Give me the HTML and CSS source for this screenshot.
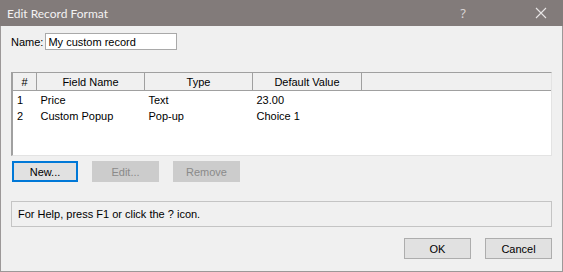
FILE: index.html
```html
<!DOCTYPE html>
<html lang="en">
<head>
    <meta charset="UTF-8">
    <title>Edit Record Format</title>
    <link rel="stylesheet" href="styles.css">
</head>
<body>
    <div class="window">
        <div class="titlebar">
            <span class="title">Edit Record Format</span>
            <div class="title-btns">
                <span class="help-btn">?</span>
                <svg class="close-btn" width="12" height="12" viewBox="0 0 12 12">
                    <path d="M1 1 L11 11 M11 1 L1 11" stroke="#e8e6e6" stroke-width="1.1" fill="none"/>
                </svg>
            </div>
        </div>

        <div class="content">
            <div class="name-row">
                <label for="recName">Name:</label>
                <input type="text" id="recName" value="My custom record">
            </div>

            <div class="list">
                <table>
                    <thead>
                        <tr>
                            <th class="col-num">#</th>
                            <th class="col-name">Field Name</th>
                            <th class="col-type">Type</th>
                            <th class="col-default">Default Value</th>
                            <th class="col-fill"></th>
                        </tr>
                    </thead>
                    <tbody>
                        <tr>
                            <td>1</td>
                            <td>Price</td>
                            <td>Text</td>
                            <td>23.00</td>
                            <td></td>
                        </tr>
                        <tr>
                            <td>2</td>
                            <td>Custom Popup</td>
                            <td>Pop-up</td>
                            <td>Choice 1</td>
                            <td></td>
                        </tr>
                    </tbody>
                </table>
            </div>

            <div class="list-btns">
                <button class="btn focused">New...</button>
                <button class="btn" disabled>Edit...</button>
                <button class="btn" disabled>Remove</button>
            </div>

            <div class="status">For Help, press F1 or click the ? icon.</div>

            <div class="dialog-btns">
                <button class="btn">OK</button>
                <button class="btn">Cancel</button>
            </div>
        </div>
    </div>
</body>
</html>
```

FILE: styles.css
```css
/* General */
body {
    margin: 0;
    font-family: "Liberation Sans", Arial, sans-serif;
    font-size: 11px;
    color: #000;
}

.window {
    width: 563px;
    height: 272px;
    box-sizing: border-box;
    background-color: #f0f0f0;
    border: 1px solid #9c9898;
    border-top: none;
    display: flex;
    flex-direction: column;
}

/* Title bar */
.titlebar {
    height: 26px;
    margin: 0 -1px;
    background-color: #827b7a;
    display: flex;
    align-items: center;
    justify-content: space-between;
    padding-left: 7px;
}

.title {
    font-family: Lato, "Noto Sans", sans-serif;
    font-size: 12px;
    color: #f4f2f2;
}

.title-btns {
    display: flex;
    align-items: center;
}

.help-btn {
    font-family: "Noto Sans", sans-serif;
    font-size: 13px;
    color: #d8d4d4;
    margin-right: 69px;
}

.close-btn {
    margin-right: 16px;
}

/* Content */
.content {
    padding: 7px 10px 0 10px;
    display: flex;
    flex-direction: column;
}

.name-row {
    display: flex;
    align-items: center;
    gap: 2px;
}

.name-row label {
    padding-top: 1px;
}

.name-row input {
    width: 132px;
    height: 17px;
    box-sizing: border-box;
    border: 1px solid #a9a9a9;
    padding: 0 2px;
    font-family: "Liberation Sans", Arial, sans-serif;
    font-size: 11px;
    outline: none;
}

/* List view */
.list {
    margin-top: 22px;
    width: 541px;
    height: 84px;
    box-sizing: border-box;
    background-color: #fff;
    border-top: 1px solid #a0a0a0;
    border-left: 2px solid #a0a0a0;
    border-right: 1px solid #e3e3e3;
    border-bottom: 1px solid #e3e3e3;
    overflow: hidden;
}

table {
    border-collapse: collapse;
    width: 100%;
}

th {
    height: 17px;
    padding: 0;
    background-color: #f0f0f0;
    font-weight: normal;
    text-align: center;
    border-bottom: 1px solid #a0a0a0;
    border-right: 1px solid #a0a0a0;
}

th.col-fill {
    border-right: none;
}

.col-num { width: 23px; }
.col-name { width: 107px; }
.col-type { width: 107px; }
.col-default { width: 108px; }

td {
    height: 16px;
    padding: 0 0 0 4px;
    white-space: nowrap;
}

tbody tr:first-child td {
    padding-top: 1px;
}

/* Buttons */
.btn {
    width: 67px;
    height: 21px;
    box-sizing: border-box;
    background-color: #e1e1e1;
    border: 1px solid #adadad;
    font-family: "Liberation Sans", Arial, sans-serif;
    font-size: 11px;
    color: #000;
    padding: 0;
}

.btn.focused {
    border: 2px solid #0078d7;
}

.btn:disabled {
    background-color: #cccccc;
    border-color: #cccccc;
    color: #8a8a8a;
}

.list-btns {
    margin-top: 5px;
    display: flex;
    gap: 14px;
}

.list-btns .btn:first-child {
    width: 66px;
    margin-left: 1px;
}

.status {
    margin-top: 19px;
    width: 541px;
    height: 26px;
    box-sizing: border-box;
    border: 1px solid #c4c4c4;
    padding-left: 6px;
    display: flex;
    align-items: center;
}

.dialog-btns {
    margin-top: 11px;
    display: flex;
    justify-content: flex-end;
    gap: 14px;
    width: 541px;
}
```
